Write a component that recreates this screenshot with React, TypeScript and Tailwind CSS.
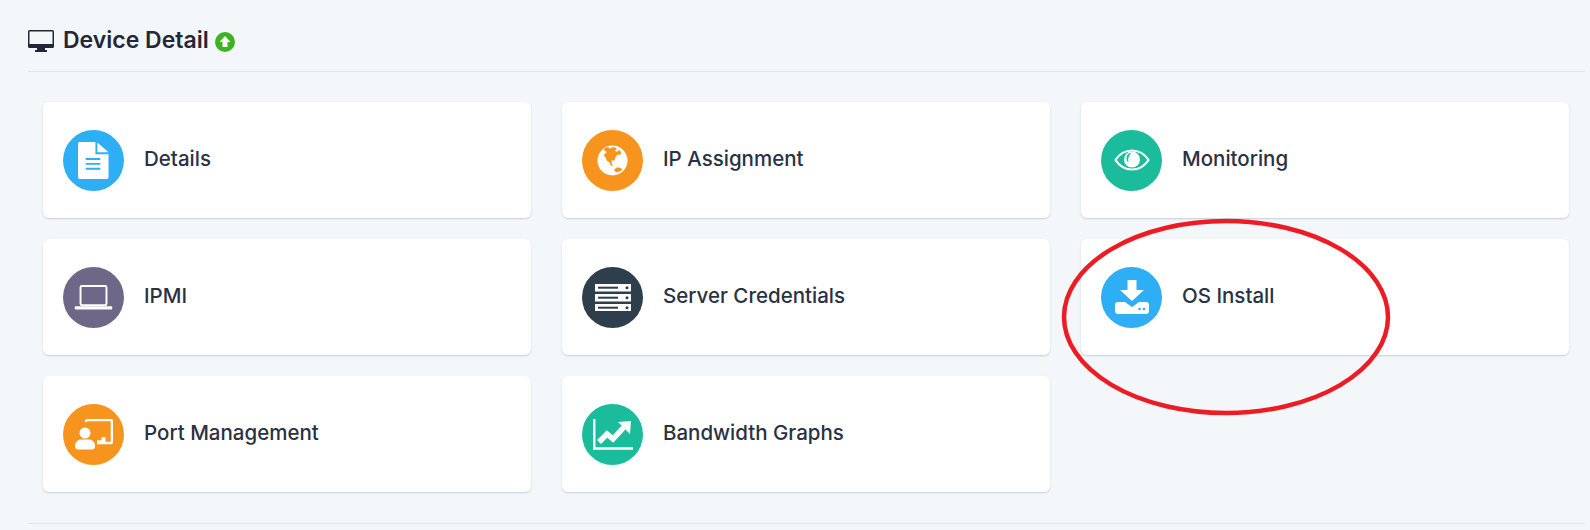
import type { ReactNode } from "react";

const font = { fontFamily: "Inter, sans-serif" };

function Doc() {
  return (
    <svg viewBox="0 0 32 38" className="w-[31px] h-[37px]">
      <path d="M0 1.5A1.5 1.5 0 0 1 1.5 0H18v12.5h13.5V36.500a1.500 1.500 0 0 1-1.500 1.500H1.500A1.500 1.500 0 0 1 0 36.500Z" fill="#fff" />
      <path d="M20 0.500 31.500 10.500H20Z" fill="#fff" />
      <path d="M8 17.500h15M8 22.500h15M8 27.500h15" stroke="#2eaef5" strokeWidth="2" />
    </svg>
  );
}

function Globe() {
  return (
    <svg viewBox="0 0 32 32" className="w-[31px] h-[31px]">
      <circle cx="16" cy="16" r="15.500" fill="#fff" />
      <path
        d="M8 3l4-1 1 2 3-2 4 1 0 2-2 1 3 1 2-2 2 3-1 2-3 0-2 3-1 3-3 0 0 3 2 3-3-1-1-3-3-2-1-3-2-2 1-2 2-1-1-2-2 0Z"
        fill="#f7941d"
      />
      <path d="M18 25l3-2 4 1 1 2-5 2-3-1Z" fill="#f7941d" />
    </svg>
  );
}

function Eye() {
  return (
    <svg viewBox="0 0 36 22" className="w-[36px] h-[22px]">
      <path d="M1.500 11C6 4 11.500 1.500 18 1.500S30 4 34.500 11C30 18 24.500 20.500 18 20.500S6 18 1.500 11Z" fill="none" stroke="#fff" strokeWidth="2.200" />
      <circle cx="18" cy="10.500" r="8" fill="#fff" />
      <path d="M17.500 3.500c-3 .5-5 2.500-5 5.500 0 2 .8 3.500 2 4.500-1-3 0-7 3-10Z" fill="#1abc9c" />
    </svg>
  );
}

function Laptop() {
  return (
    <svg viewBox="0 0 40 26" className="w-[39px] h-[25px]">
      <rect x="6.500" y="1" width="27" height="20" rx="1.500" fill="none" stroke="#fff" strokeWidth="2" />
      <rect x="0.500" y="22" width="39" height="3.500" rx="1" fill="#fff" />
    </svg>
  );
}

function Server() {
  return (
    <svg viewBox="0 0 36 27" className="w-[36px] h-[27px]">
      {[0, 10, 20].map((y) => (
        <g key={y}>
          <rect y={y} width="36" height="7.500" fill="#fff" />
          <rect x="3" y={y + 2.700} width="20" height="2" fill="#2f3e4c" />
          <circle cx="32" cy={y + 3.700} r="1.500" fill="#2f3e4c" />
        </g>
      ))}
    </svg>
  );
}

function Download() {
  return (
    <svg viewBox="0 0 34 34" className="w-[34px] h-[34px]">
      <path d="M12.500 0h9v10H29L17 21 5 10h7.500Z" fill="#fff" />
      <path d="M3 22h7l7 5 7-5h7a3 3 0 0 1 3 3v6a3 3 0 0 1-3 3H3a3 3 0 0 1-3-3v-6a3 3 0 0 1 3-3Z" fill="#fff" />
      <circle cx="24.500" cy="29" r="1.300" fill="#2eaef5" />
      <circle cx="29" cy="29" r="1.300" fill="#2eaef5" />
    </svg>
  );
}

function Presenter() {
  return (
    <svg viewBox="0 0 38 31" className="w-[38px] h-[31px]">
      <path d="M11 3V2.500A1.500 1.500 0 0 1 12.500 1h23A1.500 1.500 0 0 1 37 2.500v20a1.500 1.500 0 0 1-1.500 1.500H30" fill="none" stroke="#fff" strokeWidth="2.500" />
      <path d="M22 25.200v-4h4.500v-3h4v7Z" fill="#fff" />
      <circle cx="10" cy="14" r="5.500" fill="#fff" />
      <path d="M0 27c0-4 3-6.500 6-6.500h8c3 0 6 2.500 6 6.500 0 2-1 3.500-3 3.500H3c-2 0-3-1.500-3-3.500Z" fill="#fff" />
    </svg>
  );
}

function Chart() {
  return (
    <svg viewBox="0 0 40 31" className="w-[40px] h-[31px]">
      <path d="M1.200 0v29.500h38.800" fill="none" stroke="#fff" strokeWidth="2.500" />
      <path d="M6 23l8-8 6 5 11-12" fill="none" stroke="#fff" strokeWidth="5.500" />
      <path d="M25 3l13-1-1 13Z" fill="#fff" />
    </svg>
  );
}

function Card({ label, color, children }: { label: string; color: string; children: ReactNode }) {
  return (
    <div className="h-[116px] rounded-md bg-white shadow-[0_1px_2px_rgba(140,160,180,0.45)] flex items-center pl-[20px] gap-[20px]">
      <div className={`w-[61px] h-[61px] rounded-full flex items-center justify-center ${color}`}>{children}</div>
      <span className="text-[20.5px] font-medium text-[#2a3142] -mt-px">{label}</span>
    </div>
  );
}

export default function App() {
  return (
    <div className="relative h-[530px] overflow-hidden bg-[#f4f7fa] pl-[28px] pr-[5px]" style={font}>
      {/* Page heading */}
      <div className="h-[72px] border-b border-[#e2e6ea] flex items-center pt-[10px] gap-[9px]">
        <svg viewBox="0 0 26 22" className="w-[26px] h-[22px]">
          <rect x="0" y="0" width="26" height="18" rx="1.500" fill="#232838" />
          <rect x="1.500" y="1.500" width="23" height="12.500" fill="#f4f7fa" />
          <path d="M9 18h8v2h2v2H7v-2h2Z" fill="#232838" />
        </svg>
        <h1 className="text-[23px] font-semibold text-[#232838] flex items-center gap-[6px]">
          Device Detail
          <svg viewBox="0 0 20 20" className="w-[20px] h-[20px] mt-[2px]">
            <circle cx="10" cy="10" r="10" fill="#3fb31f" />
            <path d="M10 4l5.500 6H12.500v5h-5v-5H4.500Z" fill="#fff" />
          </svg>
        </h1>
      </div>

      {/* Tiles */}
      <div className="grid grid-cols-3 gap-x-[31px] gap-y-[21px] pl-[15px] pr-[16px] pt-[30px]">
        <Card label="Details" color="bg-[#2eaef5]"><Doc /></Card>
        <Card label="IP Assignment" color="bg-[#f7941d]"><Globe /></Card>
        <Card label="Monitoring" color="bg-[#1abc9c]"><Eye /></Card>
        <Card label="IPMI" color="bg-[#6f6788]"><Laptop /></Card>
        <Card label="Server Credentials" color="bg-[#2f3e4c]"><Server /></Card>
        <Card label="OS Install" color="bg-[#2eaef5]"><Download /></Card>
        <Card label="Port Management" color="bg-[#f7941d]"><Presenter /></Card>
        <Card label="Bandwidth Graphs" color="bg-[#1abc9c]"><Chart /></Card>
      </div>

      <div className="mt-[31px] border-t border-[#e2e6ea]" />

      {/* Hand-drawn annotation on top of the screenshot */}
      <svg viewBox="0 0 332 198" className="absolute left-[1060px] top-[218px] w-[332px] h-[198px] pointer-events-none">
        <ellipse cx="166" cy="99" rx="162" ry="96" fill="none" stroke="#ed1c24" strokeWidth="4.500" />
      </svg>
    </div>
  );
}
